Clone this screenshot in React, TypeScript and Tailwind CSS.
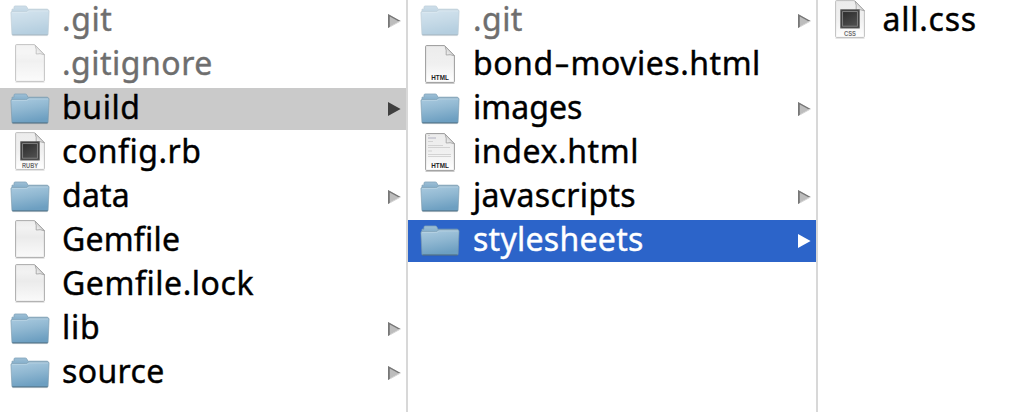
import React from "react";

type Kind = "folder" | "blank" | "HTML" | "HTML-lines" | "RUBY" | "CSS";
type State = "normal" | "active" | "selected";

interface Entry {
  name: string;
  kind: Kind;
  dim?: boolean;
  state?: State;
  spacing: string;
}

const project: Entry[] = [
  { name: ".git", kind: "folder", dim: true, spacing: "tracking-[0.6px]" },
  { name: ".gitignore", kind: "blank", dim: true, spacing: "tracking-[0.5px]" },
  { name: "build", kind: "folder", state: "active", spacing: "tracking-[0.6px]" },
  { name: "config.rb", kind: "RUBY", spacing: "tracking-[0.5px]" },
  { name: "data", kind: "folder", spacing: "tracking-[0.2px]" },
  { name: "Gemfile", kind: "blank", spacing: "tracking-[0.2px]" },
  { name: "Gemfile.lock", kind: "blank", spacing: "tracking-[0.55px]" },
  { name: "lib", kind: "folder", spacing: "tracking-[0.7px]" },
  { name: "source", kind: "folder", spacing: "tracking-[0.35px]" },
];

const build: Entry[] = [
  { name: ".git", kind: "folder", dim: true, spacing: "tracking-[0.45px]" },
  { name: "bond-movies.html", kind: "HTML", spacing: "tracking-[0.53px]" },
  { name: "images", kind: "folder", spacing: "tracking-[0.05px]" },
  { name: "index.html", kind: "HTML-lines", spacing: "tracking-[0.6px]" },
  { name: "javascripts", kind: "folder", spacing: "tracking-[0.35px]" },
  { name: "stylesheets", kind: "folder", state: "selected", spacing: "tracking-[0.27px]" },
];

const stylesheets: Entry[] = [{ name: "all.css", kind: "CSS", spacing: "tracking-[0.75px]" }];

function Gradients() {
  return (
    <svg className="absolute size-0" aria-hidden="true">
      <defs>
        <linearGradient id="folderFront" x1="0" y1="0" x2="0.25" y2="1">
          <stop offset="0" stopColor="#abcbe0" />
          <stop offset="0.5" stopColor="#8fb7d1" />
          <stop offset="1" stopColor="#6d9fc1" />
        </linearGradient>
        <linearGradient id="folderBack" x1="0" y1="0" x2="0" y2="1">
          <stop offset="0" stopColor="#9fc0d6" />
          <stop offset="1" stopColor="#78a6c5" />
        </linearGradient>
        <linearGradient id="page" x1="0" y1="0" x2="0" y2="1">
          <stop offset="0" stopColor="#ececec" />
          <stop offset="0.5" stopColor="#f0f0f0" />
          <stop offset="1" stopColor="#ffffff" />
        </linearGradient>
        <linearGradient id="blankPage" x1="0" y1="0" x2="0" y2="1">
          <stop offset="0" stopColor="#ededed" />
          <stop offset="0.2" stopColor="#f2f2f2" />
          <stop offset="0.45" stopColor="#ebebeb" />
          <stop offset="1" stopColor="#fafafa" />
        </linearGradient>
        <linearGradient id="fold" x1="0" y1="1" x2="0.6" y2="0.4">
          <stop offset="0" stopColor="#ffffff" />
          <stop offset="1" stopColor="#cfcfcf" />
        </linearGradient>
        <linearGradient id="chip" x1="0" y1="0" x2="0.6" y2="1">
          <stop offset="0" stopColor="#2c2c2c" />
          <stop offset="1" stopColor="#4c4c4c" />
        </linearGradient>
      </defs>
    </svg>
  );
}

function Folder() {
  return (
    <svg width="40" height="44" viewBox="0 0 40 44">
      <path d="M2 14V9.2H4V7.2q0-1.2 1.2-1.2H15.3q1.2 0 1.7 1.2l.8 2H37.2q.8 0 .8.8V14z" fill="url(#folderBack)" stroke="#80a2b9" strokeWidth=".8" />
      <path d="M.9 12.8q-.2-1.2 1-1.2H15.6q1 0 1.5-.5l.7-.6q.5-.5 1.4-.5H38q1.2 0 1.1 1.2L38.1 34.2q0 .9-1 .9H2.9q-1 0-1-.9z" fill="url(#folderFront)" stroke="#7897aa" strokeOpacity=".75" strokeWidth=".8" />
      <path d="M2 12.4H16.3q1 0 1.6-.6l.5-.5q.5-.4 1.2-.4H38" fill="none" stroke="#c4dbea" strokeWidth=".6" />
      <path d="M2.4 34.8H37.6" stroke="#55788f" strokeWidth="1" />
      <path d="M2.5 35.7H37.5" stroke="#000" strokeOpacity=".15" strokeWidth=".8" />
    </svg>
  );
}

function Page({ kind }: { kind: Kind }) {
  const chip = kind === "RUBY" || kind === "CSS";
  const html = kind === "HTML" || kind === "HTML-lines";
  return (
    <svg width="40" height="44" viewBox="0 0 40 44">
      <g transform={html ? "translate(0 1)" : undefined}>
        <path d="M5.5 38.2H34.5" stroke="#000" strokeOpacity={html ? 0.3 : 0.15} strokeWidth="1" />
        <path
          d="M6.5.6H24.6L34.4 10.6V36.4q0 1-1 1H6.6q-1 0-1-1V1.6q0-1 .9-1z"
          fill={kind === "blank" ? "url(#blankPage)" : "url(#page)"}
          stroke={html ? "#909090" : chip ? "#b8b8b8" : "#a2a2a2"}
          strokeWidth=".9"
        />
        {kind === "HTML-lines" && (
          <g stroke="#c6c6c6" strokeWidth=".7">
            <path d="M8 5H16" stroke="#9a9ab0" />
            <path d="M8 2.5H10M8 8.5H13M8 12.5H23M8 14.5H30M8 18H12M8 21.5H31M8 23.5H31" />
          </g>
        )}
        <path d="M25 1L34.4 10.8Q30 9 26.2 10Q26.8 5 25 1z" fill="url(#fold)" stroke="#9c9c9c" strokeWidth=".8" />
        {chip && (
          <g>
            <rect x="10.8" y="9.8" width="18.4" height="18.2" fill="#383838" stroke="#5c5c5c" />
            <rect x="12.6" y="11.6" width="14.8" height="14.6" fill="url(#chip)" stroke="#888" strokeWidth=".9" />
          </g>
        )}
        {kind !== "blank" && (
          <text
            x="20"
            y={chip ? 35.6 : 34.8}
            textAnchor="middle"
            textLength={kind === "CSS" ? 12 : kind === "RUBY" ? 16 : 17.5}
            lengthAdjust="spacingAndGlyphs"
            fill={chip ? "#6e6e6e" : "#222"}
            className={`font-['Liberation_Sans',sans-serif] font-bold ${chip ? "text-[7px]" : "text-[7.5px]"}`}
          >
            {chip ? kind : "HTML"}
          </text>
        )}
      </g>
    </svg>
  );
}

function Arrow({ state }: { state: State }) {
  if (state !== "normal") {
    return (
      <svg width="14" height="16" viewBox="0 0 14 16" className="mt-[13px]">
        <path d="M1 1L13.6 8L1 15z" fill={state === "active" ? "#404040" : "#fff"} />
      </svg>
    );
  }
  return (
    <svg width="14" height="16" viewBox="0 0 14 16" className="mt-[13px]">
      <path d="M1 1L13.6 8L1 15z" fill="#bdbdbd" />
      <path d="M1 1V15L2.8 14V3.6L11 8H13.6z" fill="#777" />
      <path d="M3 13.8L13.6 8" stroke="#d5d5d5" strokeWidth="1" />
    </svg>
  );
}

function Name({ text }: { text: string }) {
  const [head, tail] = text.split("-");
  if (tail === undefined) return <>{text}</>;
  return (
    <>
      {head}
      <span className="mx-[3px] inline-block scale-x-150 scale-y-95">-</span>
      {tail}
    </>
  );
}

function Row({ entry }: { entry: Entry }) {
  const state = entry.state ?? "normal";
  const background = state === "active" ? "bg-[#cacaca]" : state === "selected" ? "bg-[#2c64c9]" : "";
  const color = state === "selected" ? "text-white" : entry.dim ? "text-[#6e6e6e]" : "text-black";
  return (
    <li className={`mb-0.5 flex h-[42px] items-start pr-[5px] ${background}`}>
      <span className={`ml-2.5 h-[42px] w-10 shrink-0 ${entry.dim ? (entry.kind === "blank" ? "opacity-70" : "opacity-50") : ""}`}>
        {entry.kind === "folder" ? <Folder /> : <Page kind={entry.kind} />}
      </span>
      <span className={`ml-3 grow whitespace-nowrap text-[32px] leading-[38px] font-normal [-webkit-text-stroke:0.4px_currentColor] ${color} ${entry.spacing}`}>
        <Name text={entry.name} />
      </span>
      {entry.kind === "folder" && <Arrow state={state} />}
    </li>
  );
}

function Column({ entries, className }: { entries: Entry[]; className: string }) {
  return (
    <ul className={`h-full ${className}`}>
      {entries.map((entry) => (
        <Row key={entry.name} entry={entry} />
      ))}
    </ul>
  );
}

export default function App() {
  return (
    <main className="flex h-[412px] w-[1024px] overflow-hidden bg-white font-['Noto_Sans',sans-serif]">
      <Gradients />
      <Column entries={project} className="w-[408px] shrink-0 border-r-2 border-[#d8d8d8]" />
      <Column
        entries={build}
        className="w-[410px] shrink-0 border-r-2 border-[#d8d8d8] [&>li>span:first-child]:ml-3 [&>li>span:nth-child(2)]:ml-[13px]"
      />
      <Column entries={stylesheets} className="grow [&>li>span:first-child]:ml-3 [&>li>span:nth-child(2)]:ml-[12.5px]" />
    </main>
  );
}
